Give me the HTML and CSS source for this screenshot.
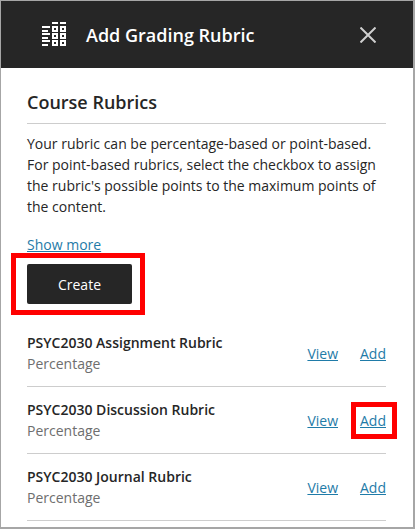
FILE: index.html
```html
<!DOCTYPE html>
<html lang="en">
<head>
<meta charset="utf-8">
<title>Add Grading Rubric</title>
<link rel="stylesheet" href="styles.css">
</head>
<body>
<div class="panel">
  <header class="bar">
    <svg class="bar-icon" width="24" height="24" viewBox="0 0 24 24" aria-hidden="true">
      <path class="fill" d="M10 0h6v2h-6zM18 0h6v2h-6zM0 4h8v2H0zM0 8h6v2H0zM0 11h8v2H0zM0 15h6v2H0zM0 18h8v2H0zM0 22h6v2H0z"/>
      <path class="fill" fill-rule="evenodd" d="M10 4h6v6h-6zM12 6v2h2V6zM18 4h6v6h-6zM20 6v2h2V6zM10 11h6v6h-6zM12 13v2h2v-2zM18 11h6v6h-6zM20 13v2h2v-2zM10 18h6v6h-6zM12 20v2h2v-2zM18 18h6v6h-6zM20 20v2h2v-2z"/>
    </svg>
    <h1 class="bar-title">Add Grading Rubric</h1>
    <svg class="bar-close" width="16" height="16" viewBox="0 0 16 16" aria-hidden="true">
      <path d="M0.500 0.500l15 15M15.500 0.500l-15 15"/>
    </svg>
  </header>
  <main class="content">
    <h2 class="heading">Course Rubrics</h2>
    <p class="intro">Your rubric can be percentage-based or point-based. For point-based rubrics, select the checkbox to assign the rubric's possible points to the maximum points of the content.</p>
    <a class="link more" href="#">Show more</a>
    <button class="create" type="button">Create</button>
    <ul class="rubrics">
      <li class="rubric">
        <div class="info"><div class="name">PSYC2030 Assignment Rubric</div><div class="type">Percentage</div></div>
        <a class="link" href="#">View</a><a class="link" href="#">Add</a>
      </li>
      <li class="rubric">
        <div class="info"><div class="name">PSYC2030 Discussion Rubric</div><div class="type">Percentage</div></div>
        <a class="link" href="#">View</a><a class="link marked" href="#">Add</a>
      </li>
      <li class="rubric">
        <div class="info"><div class="name">PSYC2030 Journal Rubric</div><div class="type">Percentage</div></div>
        <a class="link" href="#">View</a><a class="link" href="#">Add</a>
      </li>
    </ul>
  </main>
</div>
</body>
</html>
```

FILE: styles.css
```css
* { box-sizing: border-box; }
html, body { margin: 0; height: 100%; }
body {
  font-family: "Open Sans", sans-serif;
  background: #fff;
  color: #262626;
  overflow: hidden;
}
.panel {
  height: 529px;
  border: 1px solid #a6a6a6;
  border-width: 1px 2px 2px 1px;
  overflow: hidden;
}
.bar {
  height: 67px;
  background: #262626;
  color: #fff;
  display: flex;
  align-items: center;
  padding: 0 37px 0 41px;
}
.bar-icon { flex: none; margin: 0 20px 2px 0; }
.fill { fill: #fff; }
.bar-title { flex: 1; margin: 0; font-size: 18px; font-weight: 600; line-height: 24px; }
.bar-close { flex: none; }
.bar-close path { stroke: #cfcfcf; stroke-width: 2; fill: none; }
.content { padding: 22px 27px 0 26px; }
.heading {
  margin: 0;
  padding-bottom: 9px;
  font-size: 18px;
  font-weight: 600;
  line-height: 24px;
  border-bottom: 1px solid #cdcdcd;
}
.intro { margin: 9px 0 0; font-size: 14px; line-height: 21px; }
.link { color: #1f7ba8; font-size: 14px; line-height: 19px; text-decoration: underline; }
.more { display: block; width: max-content; margin-top: 18px; }
.create {
  display: block;
  width: 105px;
  height: 40px;
  margin: 10px 0 0 0;
  border: 0;
  border-radius: 2px;
  background: #262626;
  color: #fff;
  font: 400 14px "Open Sans", sans-serif;
  position: relative;
}
.create::after {
  content: "";
  position: absolute;
  inset: -11px -13px -11px -16px;
  border: 5px solid #f00;
}
.rubrics { list-style: none; margin: 16px 0 0; padding: 0; }
.rubric {
  height: 67px;
  display: flex;
  align-items: center;
  gap: 22px;
  border-bottom: 1px solid #cdcdcd;
}
.info { flex: 1; }
.name { font-size: 14px; font-weight: 600; line-height: 21px; }
.type { font-size: 14px; line-height: 21px; color: #6e6e6e; }
.marked { position: relative; }
.marked::after {
  content: "";
  position: absolute;
  inset: -9px -11px -9px -9px;
  border: 5px solid #f00;
}
```
